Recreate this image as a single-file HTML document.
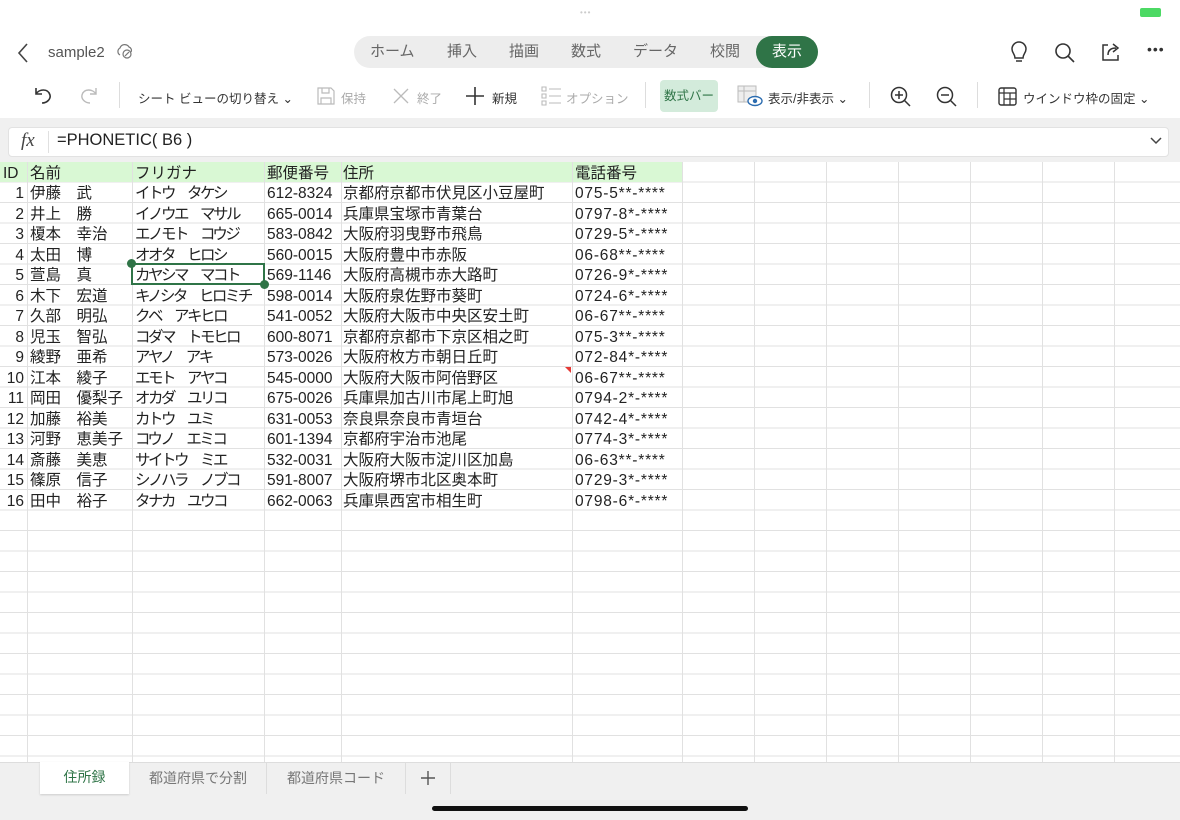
<!DOCTYPE html>
<html><head><meta charset="utf-8"><style>
*{margin:0;padding:0;box-sizing:border-box}
body{width:1180px;height:820px;overflow:hidden;background:#fff;font-family:"Liberation Sans","Noto Sans CJK JP",sans-serif;position:relative;color:#222}
.abs{position:absolute}
.tabs{left:354px;top:36px;width:464px;height:32px;border-radius:16px;background:#ededed;font-size:15px;color:#666}
.tabs span{position:absolute;top:0;line-height:32px}
.tb{font-size:12.5px;color:#333;top:88px}
.dim{color:#aaa}
.grid{left:0;top:162px;width:1180px;height:600px;
background-image:repeating-linear-gradient(to bottom,transparent 0,transparent 19.5px,#e1e1e1 19.5px,#e1e1e1 20.5px);}
.vl{position:absolute;top:162px;height:600px;width:1px;background:#e1e1e1}
.rows{position:absolute;left:0;top:2px;width:700px;height:520px}
.row{position:absolute;left:0;height:20.5px;width:700px;font-size:15.5px;line-height:20.5px;white-space:nowrap}
.row span{position:absolute;top:0}
.c0{width:24px;text-align:right;left:0}
.c1{left:30px}.c2{left:135px;letter-spacing:-2.5px}.c3{left:267px}.c4{left:343px}.c5{left:575px;letter-spacing:0.8px}
</style></head><body>
<div class="abs" style="left:580px;top:11px;width:20px;height:4px;color:#ccc;font-size:8px;line-height:4px;letter-spacing:1px">•••</div>
<div class="abs" style="left:1140px;top:8px;width:21px;height:9px;border-radius:2px;background:#4cd964"></div>
<svg class="abs" style="left:16px;top:42px" width="14" height="22"><path d="M11 2 L3 11 L11 20" fill="none" stroke="#444" stroke-width="1.6"/></svg>
<div class="abs" style="left:48px;top:44px;font-size:15px;color:#555">sample2</div>
<svg class="abs" style="left:115px;top:42px" width="20" height="18"><path d="M5 13 A4 4 0 0 1 5 6 A5 5 0 0 1 14 5 A3.5 3.5 0 0 1 16 10" fill="none" stroke="#777" stroke-width="1.2"/><circle cx="12" cy="12" r="4" fill="#fff" stroke="#777" stroke-width="1.2"/><path d="M10 14 L14 10" stroke="#777" stroke-width="1.2"/></svg>
<div class="abs tabs">
<span style="left:16px">ホーム</span><span style="left:93px">挿入</span><span style="left:155px">描画</span><span style="left:217px">数式</span><span style="left:279px">データ</span><span style="left:356px">校閲</span>
<div class="abs" style="left:402px;top:0;width:62px;height:32px;border-radius:16px;background:#2f7447;color:#fff;text-align:center;line-height:32px">表示</div>
</div>
<svg class="abs" style="left:1007px;top:40px" width="24" height="26"><path d="M8 18 C8 14 5 13 5 9 A7 7 0 0 1 19 9 C19 13 16 14 16 18 Z M9 21 H15" fill="none" stroke="#333" stroke-width="1.5"/></svg>
<svg class="abs" style="left:1053px;top:41px" width="24" height="24"><circle cx="10" cy="10" r="7" fill="none" stroke="#333" stroke-width="1.6"/><path d="M15 15 L21 21" stroke="#333" stroke-width="1.6"/></svg>
<svg class="abs" style="left:1099px;top:40px" width="24" height="24"><path d="M9 5 H4 V20 H19 V15" fill="none" stroke="#333" stroke-width="1.5"/><path d="M9 15 C9 10 12 8 17 8 M14 4 L19 8 L14 12" fill="none" stroke="#333" stroke-width="1.5"/></svg>
<div class="abs" style="left:1147px;top:41px;font-size:14px;color:#333;letter-spacing:1px">•••</div>
<svg class="abs" style="left:32px;top:84px" width="22" height="22"><path d="M4 4 V10 H10 M4 10 C7 5 16 4 18 11 C19 15 15 19 10 19" fill="none" stroke="#333" stroke-width="1.6"/></svg>
<svg class="abs" style="left:78px;top:84px" width="22" height="22"><path d="M18 4 V10 H12 M18 10 C15 5 6 4 4 11 C3 15 7 19 12 19" fill="none" stroke="#bbb" stroke-width="1.4"/></svg>
<div class="abs" style="left:119px;top:82px;width:1px;height:26px;background:#ddd"></div>
<div class="abs tb" style="left:138px">シート ビューの切り替え ⌄</div>
<svg class="abs" style="left:316px;top:86px" width="20" height="20"><path d="M2 2 H15 L18 5 V18 H2 Z M6 2 V7 H13 V2 M5 18 V12 H15 V18" fill="none" stroke="#bbb" stroke-width="1.2"/></svg>
<div class="abs tb dim" style="left:341px">保持</div>
<svg class="abs" style="left:392px;top:87px" width="18" height="18"><path d="M2 2 L16 16 M16 2 L2 16" stroke="#bbb" stroke-width="1.3"/></svg>
<div class="abs tb dim" style="left:417px">終了</div>
<svg class="abs" style="left:465px;top:86px" width="20" height="20"><path d="M10 1 V19 M1 10 H19" stroke="#333" stroke-width="1.6"/></svg>
<div class="abs tb" style="left:492px">新規</div>
<svg class="abs" style="left:540px;top:85px" width="22" height="22"><path d="M2 2 H6 V6 H2 Z M2 9 H6 V13 H2 Z M2 16 H6 V20 H2 Z M9 4 H21 M9 11 H21 M9 18 H21" fill="none" stroke="#bbb" stroke-width="1.1"/></svg>
<div class="abs tb dim" style="left:566px">オプション</div>
<div class="abs" style="left:645px;top:82px;width:1px;height:26px;background:#ddd"></div>
<div class="abs" style="left:660px;top:80px;width:58px;height:32px;border-radius:4px;background:#d3ebdb;color:#2f7447;font-size:12.5px;line-height:32px;text-align:center">数式バー</div>
<svg class="abs" style="left:737px;top:84px" width="28" height="24"><rect x="1" y="2" width="18" height="16" fill="#eee" stroke="#bbb"/><path d="M1 7 H19 M7 2 V18" stroke="#bbb"/><ellipse cx="18" cy="17" rx="7" ry="4.5" fill="#fff" stroke="#2b6cb0" stroke-width="1.4"/><circle cx="18" cy="17" r="2.2" fill="#2b6cb0"/></svg>
<div class="abs tb" style="left:768px">表示/非表示 ⌄</div>
<div class="abs" style="left:869px;top:82px;width:1px;height:26px;background:#ddd"></div>
<svg class="abs" style="left:889px;top:85px" width="24" height="24"><circle cx="10" cy="10" r="7.5" fill="none" stroke="#333" stroke-width="1.5"/><path d="M15.5 15.5 L21 21 M10 6 V14 M6 10 H14" stroke="#333" stroke-width="1.5"/></svg>
<svg class="abs" style="left:935px;top:85px" width="24" height="24"><circle cx="10" cy="10" r="7.5" fill="none" stroke="#333" stroke-width="1.5"/><path d="M15.5 15.5 L21 21 M6 10 H14" stroke="#333" stroke-width="1.5"/></svg>
<div class="abs" style="left:977px;top:82px;width:1px;height:26px;background:#ddd"></div>
<svg class="abs" style="left:998px;top:87px" width="20" height="20"><rect x="1" y="1" width="17" height="17" rx="2" fill="none" stroke="#333" stroke-width="1.4"/><path d="M6 1 V18 M1 6 H18 M6 12 H18 M12 6 V18" stroke="#333" stroke-width="1.2"/></svg>
<div class="abs tb" style="left:1023px">ウインドウ枠の固定 ⌄</div>
<div class="abs" style="left:0;top:118px;width:1180px;height:44px;background:#f0f0f0"></div>
<div class="abs" style="left:8px;top:127px;width:1161px;height:30px;background:#fff;border:1px solid #e2e2e2;border-radius:4px"></div>
<div class="abs" style="left:21px;top:130px;font-family:'Liberation Serif',serif;font-style:italic;font-size:19px;color:#444">fx</div>
<div class="abs" style="left:48px;top:131px;width:1px;height:22px;background:#e0e0e0"></div>
<div class="abs" style="left:57px;top:131px;font-size:16.5px;color:#222">=PHONETIC( B6 )</div>
<svg class="abs" style="left:1149px;top:136px" width="14" height="10"><path d="M2 2 L7 7 L12 2" fill="none" stroke="#444" stroke-width="1.5"/></svg>
<div class="abs grid"></div>
<div class="abs" style="left:0;top:162px;width:682px;height:20px;background:#d9f8d4"></div>
<div class="vl" style="left:27px"></div><div class="vl" style="left:132px"></div><div class="vl" style="left:264px"></div><div class="vl" style="left:341px"></div><div class="vl" style="left:572px"></div><div class="vl" style="left:682px"></div><div class="vl" style="left:754px"></div><div class="vl" style="left:826px"></div><div class="vl" style="left:898px"></div><div class="vl" style="left:970px"></div><div class="vl" style="left:1042px"></div><div class="vl" style="left:1114px"></div>
<div class="rows">
<div class="row" style="top:161.5px"><span style="left:3px">ID</span><span class="c1">名前</span><span class="c2" style="letter-spacing:0">フリガナ</span><span class="c3">郵便番号</span><span class="c4">住所</span><span class="c5" style="letter-spacing:0">電話番号</span></div>
<div class="row" style="top:182px"><span class="c0">1</span><span class="c1">伊藤　武</span><span class="c2">イトウ　タケシ</span><span class="c3">612-8324</span><span class="c4">京都府京都市伏見区小豆屋町</span><span class="c5">075-5**-****</span></div>
<div class="row" style="top:202.5px"><span class="c0">2</span><span class="c1">井上　勝</span><span class="c2">イノウエ　マサル</span><span class="c3">665-0014</span><span class="c4">兵庫県宝塚市青葉台</span><span class="c5">0797-8*-****</span></div>
<div class="row" style="top:223px"><span class="c0">3</span><span class="c1">榎本　幸治</span><span class="c2">エノモト　コウジ</span><span class="c3">583-0842</span><span class="c4">大阪府羽曳野市飛鳥</span><span class="c5">0729-5*-****</span></div>
<div class="row" style="top:243.5px"><span class="c0">4</span><span class="c1">太田　博</span><span class="c2">オオタ　ヒロシ</span><span class="c3">560-0015</span><span class="c4">大阪府豊中市赤阪</span><span class="c5">06-68**-****</span></div>
<div class="row" style="top:264px"><span class="c0">5</span><span class="c1">萱島　真</span><span class="c2">カヤシマ　マコト</span><span class="c3">569-1146</span><span class="c4">大阪府高槻市赤大路町</span><span class="c5">0726-9*-****</span></div>
<div class="row" style="top:284.5px"><span class="c0">6</span><span class="c1">木下　宏道</span><span class="c2">キノシタ　ヒロミチ</span><span class="c3">598-0014</span><span class="c4">大阪府泉佐野市葵町</span><span class="c5">0724-6*-****</span></div>
<div class="row" style="top:305px"><span class="c0">7</span><span class="c1">久部　明弘</span><span class="c2">クベ　アキヒロ</span><span class="c3">541-0052</span><span class="c4">大阪府大阪市中央区安土町</span><span class="c5">06-67**-****</span></div>
<div class="row" style="top:325.5px"><span class="c0">8</span><span class="c1">児玉　智弘</span><span class="c2">コダマ　トモヒロ</span><span class="c3">600-8071</span><span class="c4">京都府京都市下京区相之町</span><span class="c5">075-3**-****</span></div>
<div class="row" style="top:346px"><span class="c0">9</span><span class="c1">綾野　亜希</span><span class="c2">アヤノ　アキ</span><span class="c3">573-0026</span><span class="c4">大阪府枚方市朝日丘町</span><span class="c5">072-84*-****</span></div>
<div class="row" style="top:366.5px"><span class="c0">10</span><span class="c1">江本　綾子</span><span class="c2">エモト　アヤコ</span><span class="c3">545-0000</span><span class="c4">大阪府大阪市阿倍野区</span><span class="c5">06-67**-****</span></div>
<div class="row" style="top:387px"><span class="c0">11</span><span class="c1">岡田　優梨子</span><span class="c2">オカダ　ユリコ</span><span class="c3">675-0026</span><span class="c4">兵庫県加古川市尾上町旭</span><span class="c5">0794-2*-****</span></div>
<div class="row" style="top:407.5px"><span class="c0">12</span><span class="c1">加藤　裕美</span><span class="c2">カトウ　ユミ</span><span class="c3">631-0053</span><span class="c4">奈良県奈良市青垣台</span><span class="c5">0742-4*-****</span></div>
<div class="row" style="top:428px"><span class="c0">13</span><span class="c1">河野　恵美子</span><span class="c2">コウノ　エミコ</span><span class="c3">601-1394</span><span class="c4">京都府宇治市池尾</span><span class="c5">0774-3*-****</span></div>
<div class="row" style="top:448.5px"><span class="c0">14</span><span class="c1">斎藤　美恵</span><span class="c2">サイトウ　ミエ</span><span class="c3">532-0031</span><span class="c4">大阪府大阪市淀川区加島</span><span class="c5">06-63**-****</span></div>
<div class="row" style="top:469px"><span class="c0">15</span><span class="c1">篠原　信子</span><span class="c2">シノハラ　ノブコ</span><span class="c3">591-8007</span><span class="c4">大阪府堺市北区奥本町</span><span class="c5">0729-3*-****</span></div>
<div class="row" style="top:489.5px"><span class="c0">16</span><span class="c1">田中　裕子</span><span class="c2">タナカ　ユウコ</span><span class="c3">662-0063</span><span class="c4">兵庫県西宮市相生町</span><span class="c5">0798-6*-****</span></div>
</div>
<div class="abs" style="left:565px;top:367px;width:0;height:0;border-top:6px solid #e53935;border-left:6px solid transparent"></div>
<div class="abs" style="left:131px;top:263px;width:134px;height:22px;border:2px solid #2f7447"></div>
<div class="abs" style="left:127px;top:259px;width:9px;height:9px;border-radius:50%;background:#2f7447"></div>
<div class="abs" style="left:260px;top:280px;width:9px;height:9px;border-radius:50%;background:#2f7447"></div>
<div class="abs" style="left:0;top:762px;width:1180px;height:58px;background:#f0f0f0;border-top:1px solid #ddd"></div>
<div class="abs" style="left:40px;top:762px;width:89px;height:32px;background:#fff;box-shadow:0 1px 2px rgba(0,0,0,.15);color:#2f7447;font-size:14px;text-align:center;line-height:30px">住所録</div>
<div class="abs" style="left:149px;top:768px;font-size:14px;color:#777">都道府県で分割</div>
<div class="abs" style="left:266px;top:762px;width:1px;height:32px;background:#ddd"></div>
<div class="abs" style="left:287px;top:768px;font-size:14px;color:#777">都道府県コード</div>
<div class="abs" style="left:405px;top:762px;width:1px;height:32px;background:#ddd"></div>
<svg class="abs" style="left:420px;top:770px" width="16" height="16"><path d="M8 1 V15 M1 8 H15" stroke="#555" stroke-width="1.4"/></svg>
<div class="abs" style="left:450px;top:762px;width:1px;height:32px;background:#ddd"></div>
<div class="abs" style="left:432px;top:806px;width:316px;height:5px;border-radius:3px;background:#111"></div>
</body></html>
